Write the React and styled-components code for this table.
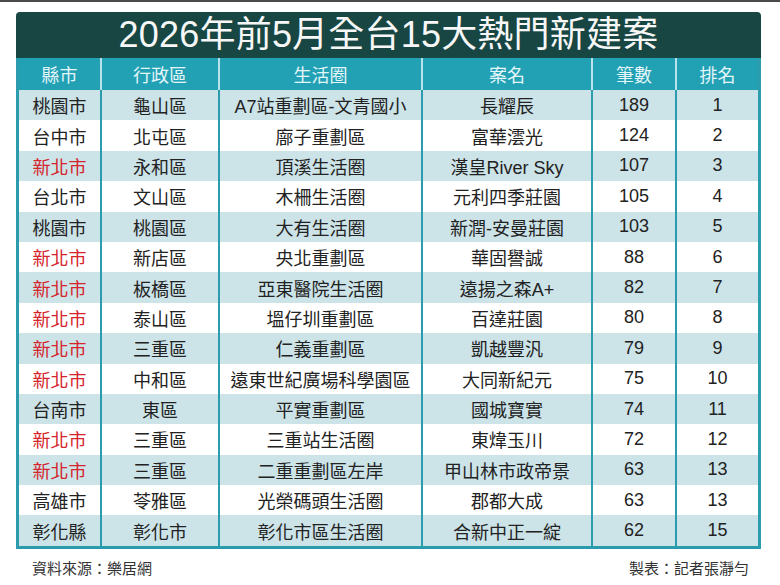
import React from 'react';
import styled, { createGlobalStyle } from 'styled-components';

const GlobalStyle = createGlobalStyle`
  html, body {
    margin: 0;
    padding: 0;
    background: #ffffff;
  }
  body {
    border-top: 2px solid #4a4a4a;
    font-family: "Liberation Sans", "Noto Sans CJK TC", sans-serif;
  }
`;

const Page = styled.div`
  width: 780px;
  height: 583px;
  box-sizing: border-box;
  padding: 10px 19px 0 16px;
  display: flex;
  flex-direction: column;
`;

const Card = styled.div`
  width: 745px;
  display: flex;
  flex-direction: column;
`;

const Title = styled.div`
  height: 46px;
  background: #174643;
  border-radius: 4px 4px 0 0;
  color: #f7f7f7;
  font-size: 36px;
  line-height: 46px;
  text-align: center;
  letter-spacing: 0.2px;
`;

const Table = styled.div`
  border: 3px solid #2b9cae;
  border-top: none;
  display: flex;
  flex-direction: column;
`;

const cols = '81px 118px 203px 170px 84px 83px';

const HeadRow = styled.div`
  display: grid;
  grid-template-columns: ${cols};
  height: 32px;
  background: #22a1b5;
`;

const HeadCell = styled.div`
  display: flex;
  align-items: center;
  justify-content: center;
  box-sizing: border-box;
  color: #e4f6f9;
  font-size: 18px;
  border-left: ${p => (p.$first ? 'none' : '2px solid #b9e3ea')};
`;

const Row = styled.div`
  display: grid;
  grid-template-columns: ${cols};
  height: 30.4px;
  background: ${p => (p.$shade ? '#cce3e8' : '#ffffff')};
`;

const Cell = styled.div`
  display: flex;
  align-items: center;
  justify-content: center;
  box-sizing: border-box;
  font-size: 18px;
  color: ${p => (p.$red ? '#d5242b' : '#222222')};
  border-left: ${p => (p.$first ? 'none' : '2px solid #2b9cae')};
  white-space: nowrap;
`;

const Footer = styled.div`
  display: flex;
  justify-content: space-between;
  align-items: center;
  padding: 8px 12px 0 16px;
  font-size: 15px;
  color: #333333;
`;

const headers = ['縣市', '行政區', '生活圈', '案名', '筆數', '排名'];

const rows = [
  ['桃園市', '龜山區', 'A7站重劃區-文青國小', '長耀辰', '189', '1'],
  ['台中市', '北屯區', '廍子重劃區', '富華澐光', '124', '2'],
  ['新北市', '永和區', '頂溪生活圈', '漢皇River Sky', '107', '3'],
  ['台北市', '文山區', '木柵生活圈', '元利四季莊園', '105', '4'],
  ['桃園市', '桃園區', '大有生活圈', '新潤-安曼莊園', '103', '5'],
  ['新北市', '新店區', '央北重劃區', '華固譽誠', '88', '6'],
  ['新北市', '板橋區', '亞東醫院生活圈', '遠揚之森A+', '82', '7'],
  ['新北市', '泰山區', '塭仔圳重劃區', '百達莊園', '80', '8'],
  ['新北市', '三重區', '仁義重劃區', '凱越豐汎', '79', '9'],
  ['新北市', '中和區', '遠東世紀廣場科學園區', '大同新紀元', '75', '10'],
  ['台南市', '東區', '平實重劃區', '國城寶實', '74', '11'],
  ['新北市', '三重區', '三重站生活圈', '東煒玉川', '72', '12'],
  ['新北市', '三重區', '二重重劃區左岸', '甲山林市政帝景', '63', '13'],
  ['高雄市', '苓雅區', '光榮碼頭生活圈', '郡都大成', '63', '13'],
  ['彰化縣', '彰化市', '彰化市區生活圈', '合新中正一綻', '62', '15'],
];

export default function App() {
  return (
    <>
      <GlobalStyle />
      <Page>
        <Card>
          <Title>2026年前5月全台15大熱門新建案</Title>
          <Table>
            <HeadRow>
              {headers.map((h, i) => (
                <HeadCell key={h} $first={i === 0}>{h}</HeadCell>
              ))}
            </HeadRow>
            {rows.map((r, ri) => (
              <Row key={ri} $shade={ri % 2 === 0}>
                {r.map((c, ci) => (
                  <Cell key={ci} $first={ci === 0} $red={ci === 0 && c === '新北市'}>
                    {c}
                  </Cell>
                ))}
              </Row>
            ))}
          </Table>
        </Card>
        <Footer>
          <span>資料來源：樂居網</span>
          <span>製表：記者張瀞勻</span>
        </Footer>
      </Page>
    </>
  );
}
